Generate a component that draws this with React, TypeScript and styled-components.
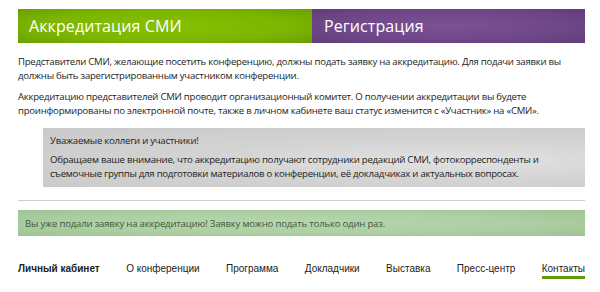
import React from "react";
import styled, { createGlobalStyle } from "styled-components";

const Global = createGlobalStyle`
  html, body { margin: 0; padding: 0; background: #ffffff; }
  body { font-family: "Open Sans", "DejaVu Sans", sans-serif; }
`;

const Page = styled.div`
  width: 567px;
  padding: 9px 15px 0 18px;
`;

const Tabs = styled.div`
  display: flex;
  height: 34px;
`;

const Tab = styled.div<{ $tone: "green" | "purple" }>`
  display: flex;
  align-items: center;
  box-sizing: border-box;
  padding-left: ${(p) => (p.$tone === "green" ? "11px" : "12px")};
  color: #ffffff;
  font-size: 16px;
  letter-spacing: 0.1px;
  ${(p) =>
    p.$tone === "green"
      ? `width: 294px; background: radial-gradient(ellipse at 50% 50%, #86c000 0%, #7db500 60%, #6aa000 100%);`
      : `flex: 1; background: radial-gradient(ellipse at 50% 50%, #7b5294 0%, #6f4788 60%, #613d78 100%);`}
`;

const Body = styled.div`
  padding-top: 12px;
`;

const Para = styled.p`
  margin: 0 0 7px;
  font-size: 9.6px;
  letter-spacing: -0.25px;
  line-height: 14px;
  color: #1e1e1e;
`;

const Notice = styled.div`
  margin: 10px 0 0 25px;
  padding: 6px 10px 6px 7px;
  height: 59px;
  box-sizing: border-box;
  background: radial-gradient(ellipse at 75% 55%, #e2e2e2 0%, #d3d3d3 45%, #c9c9c9 100%);
  color: #1e1e1e;
  font-size: 9.6px;
  letter-spacing: -0.25px;
  line-height: 14px;
`;

const NoticeTitle = styled.div`
  margin-bottom: 5px;
`;

const Rule = styled.hr`
  margin: 13px 0 0;
  border: 0;
  border-top: 1px solid #cfcfcf;
`;

const Alert = styled.div`
  margin-top: 9px;
  height: 26px;
  display: flex;
  align-items: center;
  padding-left: 7px;
  background: radial-gradient(ellipse at 50% 50%, #b6d6ad 0%, #adcfa3 55%, #9ec493 100%);
  color: #3e5a3b;
  font-size: 9.6px;
  letter-spacing: -0.2px;
`;

const Nav = styled.nav`
  display: flex;
  justify-content: space-between;
  margin-top: 26px;
  font-family: "Liberation Sans", Arial, sans-serif;
  font-size: 10px;
  line-height: 13px;
  color: #222;
`;

const NavItem = styled.span<{ $bold?: boolean; $active?: boolean }>`
  font-weight: ${(p) => (p.$bold ? 700 : 400)};
  padding-bottom: 1px;
  border-bottom: 3px solid ${(p) => (p.$active ? "#5f9a0c" : "transparent")};
`;

export default function App() {
  return (
    <>
      <Global />
      <Page>
        <Tabs>
          <Tab $tone="green">Аккредитация СМИ</Tab>
          <Tab $tone="purple">Регистрация</Tab>
        </Tabs>
        <Body>
          <Para>
            Представители СМИ, желающие посетить конференцию, должны подать заявку на аккредитацию. Для подачи заявки вы
            <br />
            должны быть зарегистрированным участником конференции.
          </Para>
          <Para>
            Аккредитацию представителей СМИ проводит организационный комитет. О получении аккредитации вы будете
            <br />
            проинформированы по электронной почте, также в личном кабинете ваш статус изменится с «Участник» на «СМИ».
          </Para>
          <Notice>
            <NoticeTitle>Уважаемые коллеги и участники!</NoticeTitle>
            Обращаем ваше внимание, что аккредитацию получают сотрудники редакций СМИ, фотокорреспонденты и
            <br />
            съемочные группы для подготовки материалов о конференции, её докладчиках и актуальных вопросах.
          </Notice>
          <Rule />
          <Alert>Вы уже подали заявку на аккредитацию! Заявку можно подать только один раз.</Alert>
          <Nav>
            <NavItem $bold>Личный кабинет</NavItem>
            <NavItem>О конференции</NavItem>
            <NavItem>Программа</NavItem>
            <NavItem>Докладчики</NavItem>
            <NavItem>Выставка</NavItem>
            <NavItem>Пресс-центр</NavItem>
            <NavItem $active>Контакты</NavItem>
          </Nav>
        </Body>
      </Page>
    </>
  );
}
